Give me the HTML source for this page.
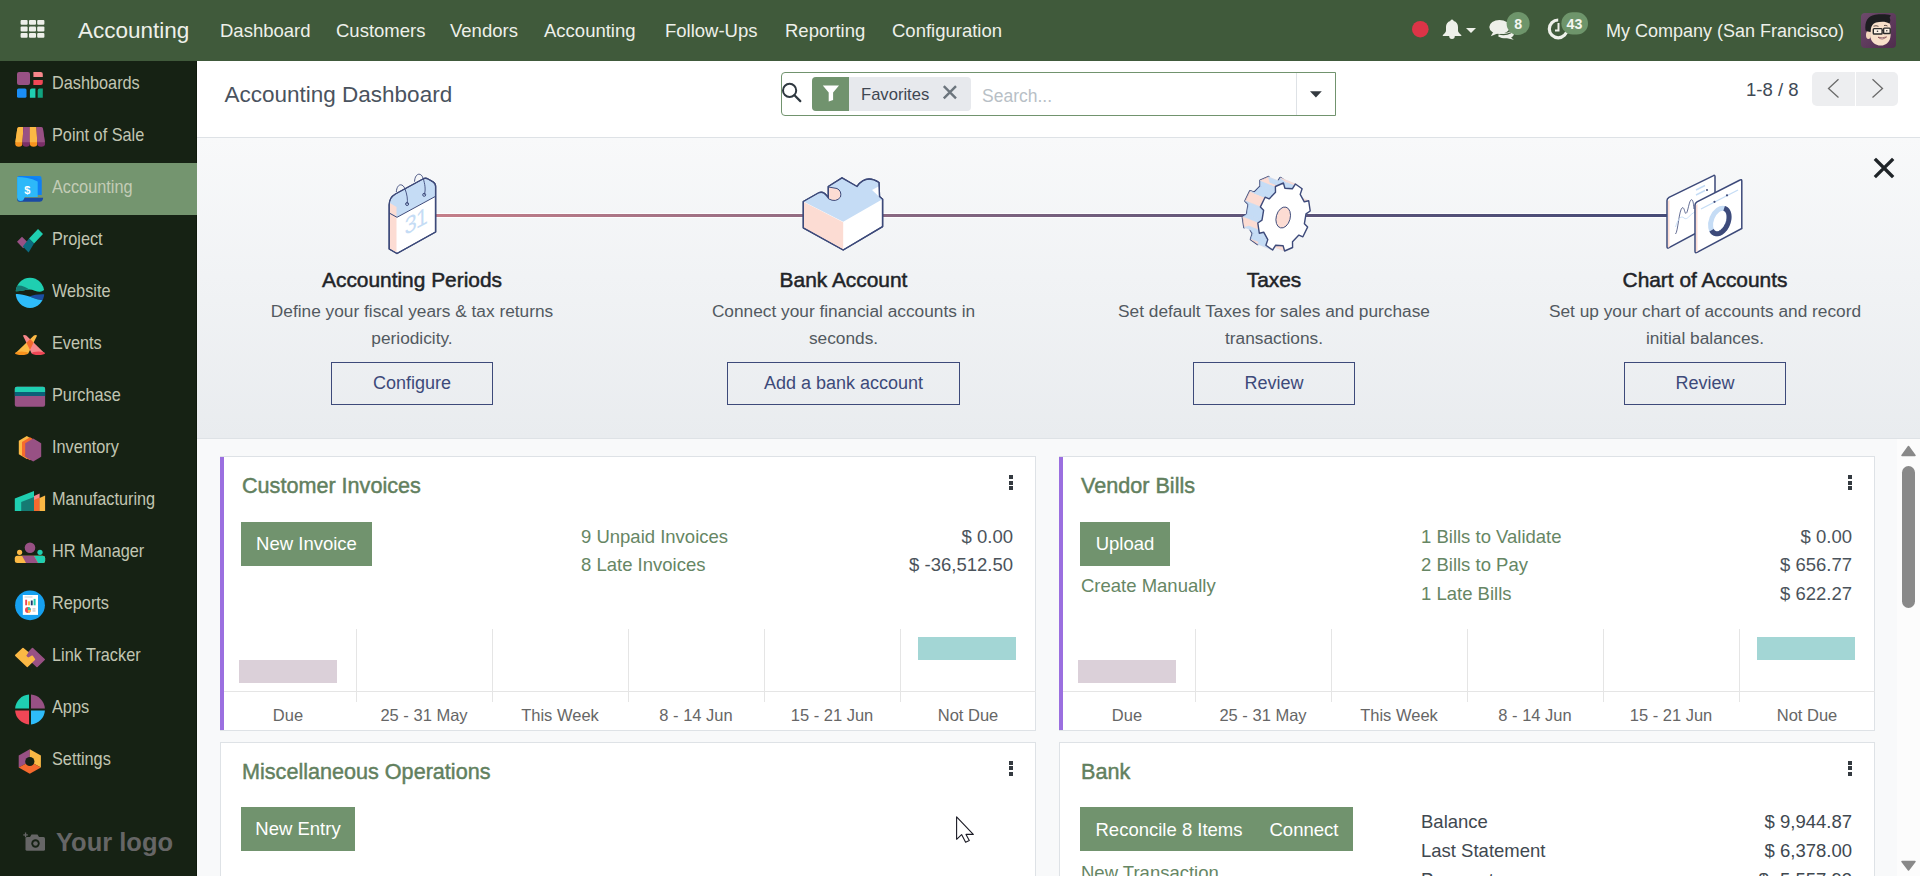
<!DOCTYPE html>
<html><head><meta charset="utf-8">
<style>
*{box-sizing:border-box;margin:0;padding:0}
html,body{width:1920px;height:876px;overflow:hidden;font-family:"Liberation Sans",sans-serif;background:#f8f9fa}
.a{position:absolute;white-space:nowrap}
#top{position:absolute;left:0;top:0;width:1920px;height:61px;background:#405a3b}
#top .m{position:absolute;color:#eef0ea;font-size:18.5px;line-height:18.5px}
#side{position:absolute;left:0;top:61px;width:197px;height:815px;background:#162214;border-right:1px solid #0f1a0c}
.si{position:absolute;left:0;width:196px;height:52px}
.si .t{position:absolute;left:52px;color:#d9dccb;font-size:17px;line-height:17px;letter-spacing:-0.3px}
.si svg{position:absolute;left:15px;top:12px}
#cp{position:absolute;left:197px;top:61px;width:1723px;height:77px;background:#fff;border-bottom:1px solid #dee2e6}
#onb{position:absolute;left:197px;top:138px;width:1723px;height:301px;background:linear-gradient(#f8f9fa,#e9ecef);border-bottom:1px solid #dee2e6}
.st{position:absolute;width:400px;text-align:center}
.st .h{position:absolute;left:0;width:400px;font-weight:bold;color:#1f2428;font-size:19.5px;line-height:19.5px}
.st .d{position:absolute;left:0;width:400px;color:#525960;font-size:17.3px;line-height:27px}
.st .b{position:absolute;top:224px;height:43px;border:1px solid #3d4a7a;color:#3d4a7a;font-size:18px;line-height:41px;text-align:center}
.card{position:absolute;background:#fff;border:1px solid #dee2e6}
.card.pl{border-left:4px solid #9a6fe0}
.ct{position:absolute;font-weight:bold;color:#62805e;font-size:20px;line-height:20px}
.dots{position:absolute;width:4px}
.dots i{display:block;width:4px;height:4px;background:#343a40;margin-bottom:1.5px}
.btn{position:absolute;background:#71936e;color:#fff;font-size:18.5px;line-height:44px;height:44px;text-align:center}
.sl{position:absolute;color:#668664;font-size:18.5px;line-height:18.5px}
.sv{position:absolute;color:#4b535b;font-size:18px;line-height:18px;text-align:right}
.lab{position:absolute;color:#666;font-size:16.5px;line-height:16.5px;text-align:center;width:136px}
.gv{position:absolute;width:1px;background:#e4e4e4}
.gh{position:absolute;height:1px;background:#e4e4e4}
.st2{font-size:18.6px;line-height:18.6px;transform:scaleX(0.875);transform-origin:0 0;color:#cdd1bf}
</style></head><body>

<!-- TOP BAR -->
<div id="top">
  <svg class="a" style="left:20px;top:20px" width="25" height="18" viewBox="0 0 25 18">
    <g fill="#eef0ea">
      <rect x="0.6" y="0" width="7" height="4.8" rx="1"/><rect x="9" y="0" width="7" height="4.8" rx="1"/><rect x="17.2" y="0" width="7.2" height="4.8" rx="1"/>
      <rect x="0.6" y="6.5" width="7" height="5" rx="1"/><rect x="9" y="6.5" width="7" height="5" rx="1"/><rect x="17.2" y="6.5" width="7.2" height="5" rx="1"/>
      <rect x="0.6" y="13" width="7" height="4.8" rx="1"/><rect x="9" y="13" width="7" height="4.8" rx="1"/><rect x="17.2" y="13" width="7.2" height="4.8" rx="1"/>
    </g>
  </svg>
  <div class="m" style="left:78px;top:19.5px;font-size:22.5px;line-height:22.5px">Accounting</div>
  <div class="m" style="left:220px;top:21.5px">Dashboard</div>
  <div class="m" style="left:336px;top:21.5px">Customers</div>
  <div class="m" style="left:450px;top:21.5px">Vendors</div>
  <div class="m" style="left:544px;top:21.5px">Accounting</div>
  <div class="m" style="left:665px;top:21.5px">Follow-Ups</div>
  <div class="m" style="left:785px;top:21.5px">Reporting</div>
  <div class="m" style="left:892px;top:21.5px">Configuration</div>

  <svg class="a" style="left:1400px;top:0" width="200" height="61" viewBox="1400 0 200 61">
    <circle cx="1420.3" cy="29.2" r="8.3" fill="#dd3447"/>
    <!-- bell -->
    <path d="M1452,19.5 C1453,19.5 1453.6,20.3 1453.6,21 C1456.5,21.8 1458,24 1458,27 L1458,30.5 C1458,32 1459.5,33.5 1461.3,35 L1461.3,36 L1442.8,36 L1442.8,35 C1444.5,33.5 1446,32 1446,30.5 L1446,27 C1446,24 1447.5,21.8 1450.4,21 C1450.4,20.3 1451,19.5 1452,19.5 Z" fill="#eef0ea"/>
    <path d="M1449.2,36 A2.8,3 0 0 0 1454.8,36 Z" fill="#eef0ea"/>
    <path d="M1466,28 H1476 L1471,33 Z" fill="#eef0ea"/>
    <!-- chat -->
    <path d="M1499,32 C1503,33.5 1508,33 1511,31 L1514,33.5 C1514,35.5 1512.5,37 1511,37.5 L1513.8,39.8 L1507,38.3 C1504,38.5 1500.5,38 1498.3,36.5 Z" fill="#eef0ea"/>
    <path d="M1498.5,33.8 C1502,35 1507,34.8 1511,32.8" fill="none" stroke="#405a3b" stroke-width="1.2"/>
    <ellipse cx="1499.5" cy="27" rx="10.2" ry="7" fill="#eef0ea"/>
    <path d="M1493.5,31.5 L1490.8,36.3 L1498,33.2 Z" fill="#eef0ea"/>
    <circle cx="1518.1" cy="23.5" r="11.5" fill="#6e956b"/>
    <text x="1518.3" y="28.9" font-family="Liberation Sans" font-weight="bold" font-size="14.2" fill="#f4f6f0" text-anchor="middle">8</text>
    <!-- activity clock -->
    <path d="M1558.2,20 A8.9,8.9 0 1 0 1567.1,28.9" fill="none" stroke="#eef0ea" stroke-width="3.2"/>
    <path d="M1558.5,22.9 V30.4 H1555" fill="none" stroke="#eef0ea" stroke-width="2"/>
    <rect x="1561.4" y="12.3" width="26.6" height="22.3" rx="11.15" fill="#6e956b"/>
    <text x="1574.5" y="28.9" font-family="Liberation Sans" font-weight="bold" font-size="14.2" fill="#f4f6f0" text-anchor="middle">43</text>
  </svg>
  <svg class="a" style="left:1861px;top:13px" width="35" height="35" viewBox="0 0 35 35">
    <defs><linearGradient id="avg" x1="0" y1="0" x2="1" y2="1"><stop offset="0" stop-color="#6e4a6c"/><stop offset="1" stop-color="#4f2c4d"/></linearGradient></defs>
    <rect width="35" height="35" rx="4" fill="url(#avg)"/>
    <ellipse cx="7.4" cy="22" rx="2.4" ry="4" fill="#f3d6bd"/>
    <path d="M9.2,11 C9.2,7.5 13,6.5 19,7 C25,7.5 29.6,9 29.6,14 L29.6,22 C29.6,28.5 25,32.6 19.8,32.6 C14,32.6 9.2,28.5 9.2,22 Z" fill="#f8e0ca"/>
    <path d="M4.5,17.5 C3.5,9 6.5,3 14,1.8 C20,1 26,1.2 29.8,2.2 L28.6,4.8 C29.8,6.8 29.4,9.2 28.2,10.5 C25,8.3 20,8.2 15,9.6 C12,10.6 10,12.5 9.6,19 L7,18.6 Z" fill="#1d1d20"/>
    <path d="M12.5,13.2 Q15,12.2 17.5,13.3 M23,12.5 Q25,12 26.5,13" fill="none" stroke="#3a2a2a" stroke-width="0.8"/>
    <rect x="12.3" y="15.6" width="8.8" height="5.4" rx="0.8" fill="#fff3e6" stroke="#2a2a2a" stroke-width="1.4"/>
    <rect x="22.6" y="15.1" width="6.6" height="5.4" rx="0.8" fill="#fff3e6" stroke="#2a2a2a" stroke-width="1.4"/>
    <path d="M21.1,17.5 H22.6" stroke="#2a2a2a" stroke-width="1.2"/>
    <circle cx="16.5" cy="18.3" r="0.8" fill="#333"/><circle cx="25.8" cy="17.8" r="0.8" fill="#333"/>
    <path d="M17,24.2 Q21,28 25.6,23.9 Q21,25.6 17,24.2 Z" fill="#fff" stroke="#7a3f45" stroke-width="0.7"/>
  </svg>
  <div class="m" style="left:1606px;top:21.5px;font-size:18px">My Company (San Francisco)</div>
</div>

<!-- SIDEBAR -->
<div id="side"><div style="position:absolute;left:0;top:102px;width:197px;height:52px;background:#74956f"></div></div>
<div class="a st2" style="left:52px;top:74.3px;color:#c2c6b3">Dashboards</div>
<div class="a st2" style="left:52px;top:126.3px;color:#c2c6b3">Point of Sale</div>
<div class="a st2" style="left:52px;top:178.3px;color:#c3ccb6">Accounting</div>
<div class="a st2" style="left:52px;top:230.3px;color:#c2c6b3">Project</div>
<div class="a st2" style="left:52px;top:282.3px;color:#c2c6b3">Website</div>
<div class="a st2" style="left:52px;top:334.3px;color:#c2c6b3">Events</div>
<div class="a st2" style="left:52px;top:386.3px;color:#c2c6b3">Purchase</div>
<div class="a st2" style="left:52px;top:438.3px;color:#c2c6b3">Inventory</div>
<div class="a st2" style="left:52px;top:490.3px;color:#c2c6b3">Manufacturing</div>
<div class="a st2" style="left:52px;top:542.3px;color:#c2c6b3">HR Manager</div>
<div class="a st2" style="left:52px;top:594.3px;color:#c2c6b3">Reports</div>
<div class="a st2" style="left:52px;top:646.3px;color:#c2c6b3">Link Tracker</div>
<div class="a st2" style="left:52px;top:698.3px;color:#c2c6b3">Apps</div>
<div class="a st2" style="left:52px;top:750.3px;color:#c2c6b3">Settings</div>
<svg class="a" style="left:0;top:0" width="197" height="876" viewBox="0 0 197 876">
<defs>
<clipPath id="wc"><ellipse cx="30" cy="292.85" rx="14.3" ry="15.2"/></clipPath>
</defs>
<!-- Dashboards -->
<rect x="17" y="72" width="13" height="13" rx="2" fill="#985184"/>
<path d="M33.4 72h7.4a2 2 0 0 1 2 2v3.1h-9.4z" fill="#f7878b"/>
<path d="M33.4 80h9.4v3a2 2 0 0 1-2 2h-7.4z" fill="#f04756"/>
<rect x="17" y="88.5" width="9.5" height="9.3" rx="1.5" fill="#1a8ef6"/>
<path d="M31.9 88.5h3.5v9.3h-5.5v-7.3a2 2 0 0 1 2-2z" fill="#1fcfb1"/>
<path d="M39.7 88.5h3.1v9.3h-5.1v-7.3a2 2 0 0 1 2-2z" fill="#10a37f"/>
<!-- POS -->
<path d="M19.4,127 H23.4 L22.4,143.5 A3.6,3.3 0 0 1 15.2,143.5 L17.2,129 Q17.4,127 19.4,127 Z" fill="#f7931e"/>
<path d="M19.4,127 H23.4 L22.5,142.3 H15.3 L17.2,129 Q17.4,127 19.4,127 Z" fill="#fbb945"/>
<path d="M23.4,127 H29.9 V143.5 A3.7,3.3 0 0 1 22.5,143.5 Z" fill="#7a2f68"/>
<path d="M23.4,127 H29.9 V142.3 H22.5 Z" fill="#985184"/>
<path d="M29.9,127 H36.5 L37.3,143.5 A3.7,3.3 0 0 1 29.9,143.5 Z" fill="#f7931e"/>
<path d="M29.9,127 H36.5 L37.2,142.3 H29.9 Z" fill="#fbb945"/>
<path d="M36.5,127 H41 Q42.8,127 43,129 L45.1,143.5 A3.9,3.3 0 0 1 37.3,143.5 Z" fill="#7a2f68"/>
<path d="M36.5,127 H41 Q42.8,127 43,129 L44.9,142.3 H37.2 Z" fill="#985184"/>
<!-- Accounting -->
<path d="M19 176h20.5a2 2 0 0 1 2 2v17h-22.5z" fill="#1286f2"/>
<path d="M17.2 178a2 2 0 0 1 2-2h0.5c8 0 15 1 21.8 4v15h-24.3z" fill="#0f7ff3"/>
<path d="M17.2 200a2 2 0 0 0 2 1.7h20.5c1.5 0 2.6-0.8 3-2l0.5-2h-26z" fill="#1a4aa5"/>
<path d="M17.2 198a3.6 3.6 0 0 0 7 0.5l0.5-1.5h13v-15.5c-7-3.5-14-4.5-20.5-4.5z" fill="#2db8f9"/>
<text x="27.3" y="194" font-family="Liberation Sans" font-weight="bold" font-size="11" fill="#fff" text-anchor="middle">$</text>
<!-- Project -->
<path d="M17,241.8 L22,236.8 L28.4,243 L23.2,248.2 Z" fill="#985184"/>
<path d="M38,229 L43,234 L34,243.6 L29,238.6 Z" fill="#1fcfb1"/>
<path d="M29,238.6 L34,243.6 L28.6,252.4 L22.8,246.4 Z" fill="#0c6b80"/>
<!-- Website -->
<g clip-path="url(#wc)">
<path d="M14,291.2 C20,292 25,289.5 29.4,289.5 C33,289.5 37,292 40,291.8 C42,291.6 44,290 46,289 V270 H14 Z" fill="#1fcfb1"/>
<path d="M14,291.2 C20,292 25,289.5 29.4,289.5 C26,287 21,285 16.8,285.7 C15,286 14,287 14,288 Z" fill="#157a73"/>
<path d="M29.4,296.6 C34,295 39,294 46,294.5 V300.5 C40,300.5 35,299 29.4,296.6 Z" fill="#1b4ea3"/>
<path d="M14,294.4 C18,293.5 23,294.5 29.4,296.6 C35,299 40,300.5 46,300.5 V312 H14 Z" fill="#2ebcfa"/>
</g>
<!-- Events -->
<path d="M33.9,335.5 Q35.5,334.3 37.1,335.5 L28.3,353.6 H15.1 Z" fill="#fbb945"/>
<path d="M22.9,335.5 Q24.6,334.3 26.3,335.5 L44.9,353.6 H31.7 Z" fill="#f8878b"/>
<path d="M26.5,342.66 L30.12,339.06 L33.56,342.53 L30,350 Z" fill="#f56a2e"/>
<ellipse cx="21.6" cy="353.2" rx="6.5" ry="1.7" fill="#f7931e"/>
<ellipse cx="38.4" cy="353.2" rx="6.5" ry="1.7" fill="#f04756"/>
<!-- Purchase -->
<rect x="14.8" y="386.7" width="30.3" height="20.1" rx="2" fill="#985184"/>
<path d="M16.8,386.7 H43.1 A2,2 0 0 1 45.1,388.7 V392 H14.8 V388.7 A2,2 0 0 1 16.8,386.7 Z" fill="#1fcfb1"/>
<rect x="14.8" y="392" width="30.3" height="4" fill="#0b5f78"/>
<!-- Inventory -->
<path d="M26.8,436 L34.8,440.8 L34.8,454.2 L26.8,459 L18.8,454.2 L18.8,440.8 Z" fill="#fbb945"/>
<path d="M30,437.3 L38,442 L38,455.4 L30,460.2 L22,455.4 L22,442 Z" fill="#f56a2e"/>
<path d="M33.2,438.5 L41.2,443.3 L41.2,456.7 L33.2,461.5 L25.2,456.7 L25.2,443.3 Z" fill="#985184"/>
<!-- Manufacturing -->
<path d="M14.8,498.5 L34,491 L34,511 L14.8,511 Z" fill="#1fcfb1"/>
<path d="M21.2,502 L34,497 L34,511 L21.2,511 Z" fill="#157a73"/>
<path d="M34,496 L39.6,493.5 L39.6,511 L34,511 Z" fill="#f8878b"/>
<path d="M34,500 L39.6,497.5 L39.6,511 L34,511 Z" fill="#f56a2e"/>
<path d="M39.6,498 L45.1,495.5 L45.1,511 L39.6,511 Z" fill="#fbb945"/>
<!-- HR -->
<circle cx="30" cy="547.8" r="5.3" fill="#985184"/>
<circle cx="19.6" cy="552.3" r="2.6" fill="#fbb945"/>
<circle cx="40" cy="552.3" r="2.6" fill="#1fcfb1"/>
<rect x="14.8" y="555.8" width="30.3" height="7.2" rx="2.5" fill="#fbb945"/>
<path d="M34,555.8 H42.6 A2.5,2.5 0 0 1 45.1,558.3 V560.5 A2.5,2.5 0 0 1 42.6,563 H38 Z" fill="#1fcfb1"/>
<path d="M22,555.8 H34 L38,563 H26 Z" fill="#985184"/>
<!-- Reports -->
<circle cx="30" cy="605.3" r="14.9" fill="#16a0f0"/>
<rect x="22.8" y="595" width="15.2" height="19.9" fill="#fff"/>
<rect x="24.5" y="596.5" width="8" height="1" fill="#ccc"/>
<rect x="25.2" y="599.7" width="1.9" height="5.6" fill="#f04756"/>
<rect x="27.9" y="601.3" width="2.1" height="4" fill="#fbb945"/>
<rect x="30.8" y="600.5" width="1.9" height="4.8" fill="#1d3b6e"/>
<rect x="33.6" y="598.9" width="2" height="6.4" fill="#1fcfb1"/>
<circle cx="27.9" cy="610" r="2.9" fill="#f04756"/>
<path d="M27.9,610 V607.1 A2.9,2.9 0 0 1 30.8,610 Z" fill="#1fcfb1"/>
<path d="M27.9,610 H30.8 A2.9,2.9 0 0 1 27.9,612.9 Z" fill="#fbb945"/>
<rect x="32.5" y="608.5" width="3" height="0.9" fill="#aaa"/>
<rect x="32.5" y="610.5" width="3" height="0.9" fill="#aaa"/>
<!-- Link Tracker -->
<path d="M32.5,648.6 L44.2,659.5 L37,666.3 L25.6,655.7 Z" fill="#985184" stroke="#985184" stroke-width="1.6" stroke-linejoin="round"/>
<path d="M23,648.6 L27.6,652.4 L25.3,655.7 L27.8,658.6 L32.2,656.3 L34.4,659.5 L27.4,666.3 L15.8,655.4 Z" fill="#fbb945" stroke="#fbb945" stroke-width="1.6" stroke-linejoin="round"/>
<!-- Apps -->
<path d="M29,708.5 H15.1 A14.9,14.9 0 0 1 29,694.6 Z" fill="#1fcfb1"/>
<path d="M31,708.5 V694.6 A14.9,14.9 0 0 1 44.9,708.5 Z" fill="#985184"/>
<path d="M29,710.5 V724.4 A14.9,14.9 0 0 1 15.1,710.5 Z" fill="#f04756"/>
<path d="M31,710.5 H44.9 A14.9,14.9 0 0 1 31,724.4 Z" fill="#2ebcfa"/>
<!-- Settings -->
<path d="M29.8,761.5 L29.8,749.2 L18.7,755.5 L18.7,767.5 Z" fill="#985184"/>
<path d="M29.8,761.5 L29.8,749.2 L40.9,755.5 L40.9,767.5 Z" fill="#fbb945"/>
<path d="M29.8,761.5 L40.9,767.5 L29.8,773.8 L18.7,767.5 Z" fill="#f56a2e"/>
<circle cx="29.8" cy="761.5" r="4.6" fill="#162214"/>
<!-- Your logo camera -->
<g fill="#666">
<rect x="25.5" y="837" width="19.5" height="13.8" rx="1.5"/>
<path d="M30 837l1.5-2.5h6l1.5 2.5z"/>
<rect x="23.3" y="834.3" width="4.5" height="1.3"/>
<rect x="24.9" y="832.5" width="1.3" height="4.8"/>
</g>
<circle cx="35.5" cy="843.5" r="4.2" fill="#162214"/>
<circle cx="35.5" cy="843.5" r="2.3" fill="#666"/>
</svg>
<div class="a" style="left:56px;top:829.5px;font-weight:bold;font-size:25.5px;line-height:25.5px;color:#666;letter-spacing:0px">Your logo</div>


<!-- CONTROL PANEL -->
<div id="cp"></div>
<div class="a" style="left:224.5px;top:84.2px;font-size:22.5px;line-height:22.5px;color:#4a535e">Accounting Dashboard</div>
<div class="a" style="left:781px;top:72px;width:555px;height:44px;border:1px solid #71936e;border-radius:4px 0 0 4px;background:#fff"></div>
<div class="a" style="left:1296px;top:73px;width:1px;height:42px;background:#dee2e6"></div>
<svg class="a" style="left:1309px;top:90px" width="14" height="8" viewBox="0 0 14 8"><path d="M1 1.2h11.8l-5.9 6.3z" fill="#343a40"/></svg>
<svg class="a" style="left:781px;top:82px" width="22" height="22" viewBox="0 0 22 22"><circle cx="8.6" cy="8.4" r="6.6" fill="none" stroke="#2f3840" stroke-width="2"/><path d="M13.5 13.3l5.8 5.8" stroke="#2f3840" stroke-width="2.2" stroke-linecap="round"/></svg>
<div class="a" style="left:812px;top:77px;width:159px;height:34px;border-radius:4px;background:#e7e9ed;overflow:hidden"><div style="position:absolute;left:0;top:0;width:37px;height:34px;background:#71936e"></div></div>
<svg class="a" style="left:822px;top:85px" width="18" height="17" viewBox="0 0 18 17"><path d="M0.8 0.5h16.2l-5.9 7v7.5l-4.4 1.5v-9z" fill="#fff"/></svg>
<div class="a" style="left:861px;top:86.7px;font-size:16.6px;line-height:16.6px;color:#3f4752">Favorites</div>
<svg class="a" style="left:942px;top:85px" width="16" height="15" viewBox="0 0 16 15"><path d="M1.8 1.2l12.2 12.2M14 1.2L1.8 13.4" stroke="#6c757d" stroke-width="2.4"/></svg>
<div class="a" style="left:982px;top:87.5px;font-size:17.5px;line-height:17.5px;color:#b8bfc6">Search...</div>
<div class="a" style="left:1746px;top:80.5px;font-size:18.5px;line-height:18.5px;color:#404a55">1-8 / 8</div>
<div class="a" style="left:1812px;top:72px;width:86px;height:34px;border-radius:5px;background:#edeef0"></div>
<div class="a" style="left:1855px;top:72px;width:1px;height:34px;background:#fff"></div>
<svg class="a" style="left:1812px;top:72px" width="86" height="34" viewBox="0 0 86 34"><path d="M26.5 7.2l-10 9.2 10 9.2M60.5 7.2l10 9.2-10 9.2" fill="none" stroke="#6b6b6b" stroke-width="1.3"/></svg>


<!-- ONBOARDING -->
<div id="onb"></div>
<svg class="a" style="left:197px;top:138px" width="1723" height="300" viewBox="197 138 1723 300">
<defs><linearGradient id="lg" x1="437" y1="0" x2="1667" y2="0" gradientUnits="userSpaceOnUse">
<stop offset="0" stop-color="#c47e89"/><stop offset="0.33" stop-color="#8e6a82"/><stop offset="0.67" stop-color="#5e5579"/><stop offset="1" stop-color="#474b77"/></linearGradient></defs>
<rect x="436" y="213" width="1231" height="5" fill="#fff" opacity="0.8"/>
<rect x="436" y="214" width="1231" height="3" fill="url(#lg)"/>
<!-- calendar -->
<g stroke="#3d4a7a" stroke-width="1.4" stroke-linejoin="round">
<path d="M389.2,249 L389.2,205 Q389.2,197.5 395.5,194 L423,179 Q425.5,177.6 428,179 L433,181.8 Q435.6,183.3 435.6,186.5 L435.6,232 L397,253.5 Z" fill="#fff"/>
</g>
<path d="M389.9,203 L396.5,207 L396.5,252.5 L389.9,248.5 Z" fill="#fcdcd3"/>
<path d="M389.9,205 Q389.9,198 395.8,194.6 L423.2,179.8 Q425.5,178.5 427.7,179.8 L432.6,182.5 Q434.9,183.8 434.9,186.8 L434.9,196.5 L397,217 L389.9,213 Z" fill="#c5dcf5"/>
<path d="M389.9,203 L396.5,207 L396.5,216.5 L389.9,212.7 Z" fill="#fcdcd3"/>
<g stroke="#3d4a7a" fill="none" stroke-linejoin="round">
<path d="M389.2,249 L389.2,205 Q389.2,197.5 395.5,194 L423,179 Q425.5,177.6 428,179 L433,181.8 Q435.6,183.3 435.6,186.5 L435.6,232 L397,253.5 Z" stroke-width="1.4"/>
<path d="M389.2,213 L397,217.3 L435.6,196.3" stroke-width="1"/>
<path d="M396.3,192 C397,183 403,183 405,189 C407,194 408,200 407.1,204" stroke-width="0.9"/>
<path d="M414.5,181.7 C415,173 421,172 423,178 C425,184 426,190 424.2,194.8" stroke-width="0.9"/>
</g>
<circle cx="407.1" cy="204" r="1.5" fill="none" stroke="#3d4a7a" stroke-width="1"/>
<circle cx="424.2" cy="194.8" r="1.5" fill="none" stroke="#3d4a7a" stroke-width="1"/>
<text x="0" y="0" font-family="Liberation Sans" font-size="24" fill="#c5dcf5" transform="matrix(0.92,-0.5,0,1,404.5,235.5)" letter-spacing="-1">31</text>
<!-- puzzle -->
<path d="M803.3,201.5 L818.3,193 Q823,190.5 826.5,195.5 L828.3,197.8 L828.3,186.5 L842,177.8 L857,186.5 Q866,174 879,182.5 L879.5,196.5 L882.6,199.2 L882.6,226.6 L843.2,250 L803.3,227.8 Z" fill="#fff" stroke="#3d4a7a" stroke-width="1.4" stroke-linejoin="round"/>
<path d="M803.8,201.8 L818.3,193.5 Q823,191 826.5,196 L828.5,198.5 L828.5,187 L842,178.5 L857,187 Q866,175 878.5,183 L879,196.8 L882,199.5 L843.2,221.8 Z" fill="#c5dcf5"/>
<path d="M828.5,187 L828.5,198.8 Q836,203 840.5,197 Q842,191 837,188.5 Z" fill="#fcdcd3" stroke="#3d4a7a" stroke-width="1"/>
<path d="M803.8,202 L843.2,222.3 L843.2,249.3 L803.8,227.5 Z" fill="#fcdcd3"/>
<path d="M872,190 L878.5,186.5 L879,196.5 Z" fill="#fff"/>
<path d="M803.3,201.5 L818.3,193 Q823,190.5 826.5,195.5 L828.3,197.8 L828.3,186.5 L842,177.8 L857,186.5 Q866,174 879,182.5 L879.5,196.5 L882.6,199.2 L882.6,226.6 L843.2,250 L803.3,227.8 Z" fill="none" stroke="#3d4a7a" stroke-width="1.4" stroke-linejoin="round"/>
<!-- gear -->
<path d="M1289.4,217.7 L1292.6,221.1 L1287.9,230.8 L1283.9,229.1 L1277.5,235.7 L1277.6,241.5 L1269.6,245.0 L1268.1,239.8 L1260.7,239.2 L1257.6,244.0 L1250.9,239.3 L1252.8,233.6 L1248.7,226.2 L1244.3,227.2 L1242.8,217.0 L1247.0,214.2 L1248.6,204.3 L1245.4,200.9 L1250.1,191.2 L1254.1,192.9 L1260.5,186.3 L1260.4,180.5 L1268.4,177.0 L1269.9,182.2 L1277.3,182.8 L1280.4,178.0 L1287.1,182.7 L1285.2,188.4 L1289.3,195.8 L1293.7,194.8 L1295.2,205.0 L1291.0,207.8Z" fill="#fcdcd3" stroke="#3d4a7a" stroke-width="2.4" stroke-linejoin="round"/>
<path d="M1260.4,206.9 L1265.1,197.2 L1250.1,191.2 L1245.4,200.9Z" fill="#fcdcd3" stroke="#fcdcd3" stroke-width="0.6" stroke-linejoin="round"/>
<path d="M1263.6,210.3 L1260.4,206.9 L1245.4,200.9 L1248.6,204.3Z" fill="#c5dcf5" stroke="#c5dcf5" stroke-width="0.6" stroke-linejoin="round"/>
<path d="M1265.1,197.2 L1269.1,198.9 L1254.1,192.9 L1250.1,191.2Z" fill="#c5dcf5" stroke="#c5dcf5" stroke-width="0.6" stroke-linejoin="round"/>
<path d="M1257.8,223.0 L1262.0,220.2 L1247.0,214.2 L1242.8,217.0Z" fill="#c5dcf5" stroke="#c5dcf5" stroke-width="0.6" stroke-linejoin="round"/>
<path d="M1262.0,220.2 L1263.6,210.3 L1248.6,204.3 L1247.0,214.2Z" fill="#c5dcf5" stroke="#c5dcf5" stroke-width="0.6" stroke-linejoin="round"/>
<path d="M1259.3,233.2 L1257.8,223.0 L1242.8,217.0 L1244.3,227.2Z" fill="#fcdcd3" stroke="#fcdcd3" stroke-width="0.6" stroke-linejoin="round"/>
<path d="M1269.1,198.9 L1275.5,192.3 L1260.5,186.3 L1254.1,192.9Z" fill="#c5dcf5" stroke="#c5dcf5" stroke-width="0.6" stroke-linejoin="round"/>
<path d="M1275.5,192.3 L1275.4,186.5 L1260.4,180.5 L1260.5,186.3Z" fill="#c5dcf5" stroke="#c5dcf5" stroke-width="0.6" stroke-linejoin="round"/>
<path d="M1275.4,186.5 L1283.4,183.0 L1268.4,177.0 L1260.4,180.5Z" fill="#fcdcd3" stroke="#fcdcd3" stroke-width="0.6" stroke-linejoin="round"/>
<path d="M1263.7,232.2 L1259.3,233.2 L1244.3,227.2 L1248.7,226.2Z" fill="#c5dcf5" stroke="#c5dcf5" stroke-width="0.6" stroke-linejoin="round"/>
<path d="M1283.4,183.0 L1284.9,188.2 L1269.9,182.2 L1268.4,177.0Z" fill="#c5dcf5" stroke="#c5dcf5" stroke-width="0.6" stroke-linejoin="round"/>
<path d="M1267.8,239.6 L1263.7,232.2 L1248.7,226.2 L1252.8,233.6Z" fill="#c5dcf5" stroke="#c5dcf5" stroke-width="0.6" stroke-linejoin="round"/>
<path d="M1265.9,245.3 L1267.8,239.6 L1252.8,233.6 L1250.9,239.3Z" fill="#c5dcf5" stroke="#c5dcf5" stroke-width="0.6" stroke-linejoin="round"/>
<path d="M1284.9,188.2 L1292.3,188.8 L1277.3,182.8 L1269.9,182.2Z" fill="#c5dcf5" stroke="#c5dcf5" stroke-width="0.6" stroke-linejoin="round"/>
<path d="M1272.6,250.0 L1265.9,245.3 L1250.9,239.3 L1257.6,244.0Z" fill="#fcdcd3" stroke="#fcdcd3" stroke-width="0.6" stroke-linejoin="round"/>
<path d="M1292.3,188.8 L1295.4,184.0 L1280.4,178.0 L1277.3,182.8Z" fill="#c5dcf5" stroke="#c5dcf5" stroke-width="0.6" stroke-linejoin="round"/>
<path d="M1275.7,245.2 L1272.6,250.0 L1257.6,244.0 L1260.7,239.2Z" fill="#c5dcf5" stroke="#c5dcf5" stroke-width="0.6" stroke-linejoin="round"/>
<path d="M1295.4,184.0 L1302.1,188.7 L1287.1,182.7 L1280.4,178.0Z" fill="#fcdcd3" stroke="#fcdcd3" stroke-width="0.6" stroke-linejoin="round"/>
<path d="M1283.1,245.8 L1275.7,245.2 L1260.7,239.2 L1268.1,239.8Z" fill="#c5dcf5" stroke="#c5dcf5" stroke-width="0.6" stroke-linejoin="round"/>
<path d="M1302.1,188.7 L1300.2,194.4 L1285.2,188.4 L1287.1,182.7Z" fill="#c5dcf5" stroke="#c5dcf5" stroke-width="0.6" stroke-linejoin="round"/>
<path d="M1300.2,194.4 L1304.3,201.8 L1289.3,195.8 L1285.2,188.4Z" fill="#c5dcf5" stroke="#c5dcf5" stroke-width="0.6" stroke-linejoin="round"/>
<path d="M1284.6,251.0 L1283.1,245.8 L1268.1,239.8 L1269.6,245.0Z" fill="#c5dcf5" stroke="#c5dcf5" stroke-width="0.6" stroke-linejoin="round"/>
<path d="M1304.3,201.8 L1308.7,200.8 L1293.7,194.8 L1289.3,195.8Z" fill="#c5dcf5" stroke="#c5dcf5" stroke-width="0.6" stroke-linejoin="round"/>
<path d="M1292.6,247.5 L1284.6,251.0 L1269.6,245.0 L1277.6,241.5Z" fill="#fcdcd3" stroke="#fcdcd3" stroke-width="0.6" stroke-linejoin="round"/>
<path d="M1292.5,241.7 L1292.6,247.5 L1277.6,241.5 L1277.5,235.7Z" fill="#c5dcf5" stroke="#c5dcf5" stroke-width="0.6" stroke-linejoin="round"/>
<path d="M1298.9,235.1 L1292.5,241.7 L1277.5,235.7 L1283.9,229.1Z" fill="#c5dcf5" stroke="#c5dcf5" stroke-width="0.6" stroke-linejoin="round"/>
<path d="M1308.7,200.8 L1310.2,211.0 L1295.2,205.0 L1293.7,194.8Z" fill="#fcdcd3" stroke="#fcdcd3" stroke-width="0.6" stroke-linejoin="round"/>
<path d="M1306.0,213.8 L1304.4,223.7 L1289.4,217.7 L1291.0,207.8Z" fill="#c5dcf5" stroke="#c5dcf5" stroke-width="0.6" stroke-linejoin="round"/>
<path d="M1310.2,211.0 L1306.0,213.8 L1291.0,207.8 L1295.2,205.0Z" fill="#c5dcf5" stroke="#c5dcf5" stroke-width="0.6" stroke-linejoin="round"/>
<path d="M1302.9,236.8 L1298.9,235.1 L1283.9,229.1 L1287.9,230.8Z" fill="#c5dcf5" stroke="#c5dcf5" stroke-width="0.6" stroke-linejoin="round"/>
<path d="M1304.4,223.7 L1307.6,227.1 L1292.6,221.1 L1289.4,217.7Z" fill="#c5dcf5" stroke="#c5dcf5" stroke-width="0.6" stroke-linejoin="round"/>
<path d="M1307.6,227.1 L1302.9,236.8 L1287.9,230.8 L1292.6,221.1Z" fill="#fcdcd3" stroke="#fcdcd3" stroke-width="0.6" stroke-linejoin="round"/>
<path d="M1304.4,223.7 L1307.6,227.1 L1302.9,236.8 L1298.9,235.1 L1292.5,241.7 L1292.6,247.5 L1284.6,251.0 L1283.1,245.8 L1275.7,245.2 L1272.6,250.0 L1265.9,245.3 L1267.8,239.6 L1263.7,232.2 L1259.3,233.2 L1257.8,223.0 L1262.0,220.2 L1263.6,210.3 L1260.4,206.9 L1265.1,197.2 L1269.1,198.9 L1275.5,192.3 L1275.4,186.5 L1283.4,183.0 L1284.9,188.2 L1292.3,188.8 L1295.4,184.0 L1302.1,188.7 L1300.2,194.4 L1304.3,201.8 L1308.7,200.8 L1310.2,211.0 L1306.0,213.8Z" fill="#fff" stroke="#3d4a7a" stroke-width="1.4" stroke-linejoin="round"/>
<ellipse cx="1283.2" cy="217.5" rx="7" ry="10.7" transform="rotate(15 1283.2 217.5)" fill="#fcdcd3" stroke="#3d4a7a" stroke-width="0.9"/>
<!-- chart of accounts -->
<path d="M1667,200.5 Q1667,198.5 1669,197.3 L1713,175.8 Q1715,174.6 1715,176.6 L1715,223 L1669,247.6 Q1667,248.8 1667,246.8 Z" fill="#fff" stroke="#3d4a7a" stroke-width="1.5"/>
<path d="M1668,201 L1669.5,200 L1669.5,247 L1668,247.8 Z" fill="#fcdcd3"/>
<path d="M1675.5,234 C1678,232 1679,209 1682.4,207.7 C1684.5,207 1684.5,213.5 1686,213.4 C1688,213 1689,199.7 1691.5,199.7 C1693.5,199.7 1693.5,206 1694,209" fill="none" stroke="#3d4a7a" stroke-width="0.8"/>
<path d="M1675.5,227 C1678,219 1681,215 1684,218 C1687,221 1690,214 1695,212" fill="none" stroke="#c5dcf5" stroke-width="0.9"/>
<path d="M1696,190 L1705,185.5 M1696,195 L1705,190.5" stroke="#c5dcf5" stroke-width="1.4"/>
<circle cx="1707" cy="190" r="1" fill="#3d4a7a"/>
<path d="M1695,205 Q1695,203 1697,201.8 L1740,180 Q1741.8,179 1741.8,181 L1741.8,228.5 L1697,252.3 Q1695,253.3 1695,251.3 Z" fill="#fff" stroke="#3d4a7a" stroke-width="1.5"/>
<path d="M1696,205 L1697.5,204 L1697.5,251.5 L1696,252.3 Z" fill="#fcdcd3"/>
<path d="M1701,209 L1738,190" stroke="#c5dcf5" stroke-width="1.3"/>
<circle cx="1714.5" cy="201.8" r="1.1" fill="#3d4a7a"/><circle cx="1727" cy="195.3" r="1.1" fill="#3d4a7a"/>
<ellipse cx="1719.8" cy="221" rx="8.4" ry="13.4" transform="rotate(22 1719.8 221)" fill="none" stroke="#c5dcf5" stroke-width="5"/>
<path d="M1724.12,208.35 L1724.82,208.58 L1725.48,208.90 L1726.10,209.31 L1726.66,209.81 L1727.18,210.40 L1727.64,211.07 L1728.04,211.81 L1728.38,212.63 L1728.65,213.51 L1728.86,214.44 L1728.99,215.42 L1729.06,216.45 L1729.05,217.51 L1728.98,218.60 L1728.84,219.71 L1728.62,220.82 L1728.34,221.94 L1728.00,223.05 L1727.59,224.15 L1727.12,225.22 L1726.60,226.26 L1726.02,227.26 L1725.40,228.21 L1724.74,229.10 L1724.04,229.94 L1723.30,230.70 L1722.54,231.40 L1721.76,232.01 L1720.96,232.54 L1720.16,232.98 L1719.35,233.33 L1718.54,233.59 L1717.75,233.75 L1716.97,233.82 L1716.21,233.78 L1715.48,233.65 L1714.78,233.42 L1714.12,233.10 L1713.50,232.69 L1712.94,232.19 L1712.42,231.60 L1711.96,230.93 L1711.56,230.19" fill="none" stroke="#3d4a7a" stroke-width="5"/>
<!-- close X -->
<path d="M1876,160 L1892,176 M1892,160 L1876,176" stroke="#1f2428" stroke-width="3.3" stroke-linecap="square"/>
</svg>
<div class="a" style="left:162px;top:270.3px;width:500px;text-align:center;color:#1f2428;font-size:20.9px;line-height:20.9px;-webkit-text-stroke:0.5px #1f2428">Accounting Periods</div>
<div class="a" style="left:162px;top:298.1px;width:500px;text-align:center;color:#525960;font-size:17.3px;line-height:27px">Define your fiscal years &amp; tax returns<br>periodicity.</div>
<div class="a" style="left:331.0px;top:362px;width:162px;height:43px;border:1px solid #3d4a7a;text-align:center;color:#3d4a7a;font-size:18px;line-height:41px">Configure</div>
<div class="a" style="left:593.5px;top:270.3px;width:500px;text-align:center;color:#1f2428;font-size:20.9px;line-height:20.9px;-webkit-text-stroke:0.5px #1f2428">Bank Account</div>
<div class="a" style="left:593.5px;top:298.1px;width:500px;text-align:center;color:#525960;font-size:17.3px;line-height:27px">Connect your financial accounts in<br>seconds.</div>
<div class="a" style="left:727.0px;top:362px;width:233px;height:43px;border:1px solid #3d4a7a;text-align:center;color:#3d4a7a;font-size:18px;line-height:41px">Add a bank account</div>
<div class="a" style="left:1024px;top:270.3px;width:500px;text-align:center;color:#1f2428;font-size:20.9px;line-height:20.9px;-webkit-text-stroke:0.5px #1f2428">Taxes</div>
<div class="a" style="left:1024px;top:298.1px;width:500px;text-align:center;color:#525960;font-size:17.3px;line-height:27px">Set default Taxes for sales and purchase<br>transactions.</div>
<div class="a" style="left:1193.0px;top:362px;width:162px;height:43px;border:1px solid #3d4a7a;text-align:center;color:#3d4a7a;font-size:18px;line-height:41px">Review</div>
<div class="a" style="left:1455px;top:270.3px;width:500px;text-align:center;color:#1f2428;font-size:20.9px;line-height:20.9px;-webkit-text-stroke:0.5px #1f2428">Chart of Accounts</div>
<div class="a" style="left:1455px;top:298.1px;width:500px;text-align:center;color:#525960;font-size:17.3px;line-height:27px">Set up your chart of accounts and record<br>initial balances.</div>
<div class="a" style="left:1624.0px;top:362px;width:162px;height:43px;border:1px solid #3d4a7a;text-align:center;color:#3d4a7a;font-size:18px;line-height:41px">Review</div>


<div class="a" style="left:220px;top:456px;width:816px;height:275px;background:#fff;border:1px solid #dee2e6"><div style="position:absolute;left:-1px;top:0;bottom:0;width:4px;background:#9b6fe0"></div></div>
<div class="a" style="left:1008.5px;top:475px;width:4px;height:15px;background:linear-gradient(#343a40 0 4px,transparent 4px 5.5px,#343a40 5.5px 9.5px,transparent 9.5px 11px,#343a40 11px 15px)"></div>
<div class="a" style="left:356px;top:629px;width:1px;height:73px;background:#e5e5e5"></div>
<div class="a" style="left:492px;top:629px;width:1px;height:73px;background:#e5e5e5"></div>
<div class="a" style="left:628px;top:629px;width:1px;height:73px;background:#e5e5e5"></div>
<div class="a" style="left:764px;top:629px;width:1px;height:73px;background:#e5e5e5"></div>
<div class="a" style="left:900px;top:629px;width:1px;height:73px;background:#e5e5e5"></div>
<div class="a" style="left:224px;top:691px;width:812px;height:1px;background:#e5e5e5"></div>
<div class="a" style="left:239px;top:660px;width:98px;height:23px;background:#dbd0d9"></div>
<div class="a" style="left:918px;top:637px;width:98px;height:23px;background:#a3d6d5"></div>
<div class="a" style="left:220px;width:136px;text-align:center;top:707.3px;color:#666;font-size:16.5px;line-height:16.5px">Due</div>
<div class="a" style="left:356px;width:136px;text-align:center;top:707.3px;color:#666;font-size:16.5px;line-height:16.5px">25 - 31 May</div>
<div class="a" style="left:492px;width:136px;text-align:center;top:707.3px;color:#666;font-size:16.5px;line-height:16.5px">This Week</div>
<div class="a" style="left:628px;width:136px;text-align:center;top:707.3px;color:#666;font-size:16.5px;line-height:16.5px">8 - 14 Jun</div>
<div class="a" style="left:764px;width:136px;text-align:center;top:707.3px;color:#666;font-size:16.5px;line-height:16.5px">15 - 21 Jun</div>
<div class="a" style="left:900px;width:136px;text-align:center;top:707.3px;color:#666;font-size:16.5px;line-height:16.5px">Not Due</div>
<div class="a" style="left:1059px;top:456px;width:816px;height:275px;background:#fff;border:1px solid #dee2e6"><div style="position:absolute;left:-1px;top:0;bottom:0;width:4px;background:#9b6fe0"></div></div>
<div class="a" style="left:1847.5px;top:475px;width:4px;height:15px;background:linear-gradient(#343a40 0 4px,transparent 4px 5.5px,#343a40 5.5px 9.5px,transparent 9.5px 11px,#343a40 11px 15px)"></div>
<div class="a" style="left:1195px;top:629px;width:1px;height:73px;background:#e5e5e5"></div>
<div class="a" style="left:1331px;top:629px;width:1px;height:73px;background:#e5e5e5"></div>
<div class="a" style="left:1467px;top:629px;width:1px;height:73px;background:#e5e5e5"></div>
<div class="a" style="left:1603px;top:629px;width:1px;height:73px;background:#e5e5e5"></div>
<div class="a" style="left:1739px;top:629px;width:1px;height:73px;background:#e5e5e5"></div>
<div class="a" style="left:1063px;top:691px;width:812px;height:1px;background:#e5e5e5"></div>
<div class="a" style="left:1078px;top:660px;width:98px;height:23px;background:#dbd0d9"></div>
<div class="a" style="left:1757px;top:637px;width:98px;height:23px;background:#a3d6d5"></div>
<div class="a" style="left:1059px;width:136px;text-align:center;top:707.3px;color:#666;font-size:16.5px;line-height:16.5px">Due</div>
<div class="a" style="left:1195px;width:136px;text-align:center;top:707.3px;color:#666;font-size:16.5px;line-height:16.5px">25 - 31 May</div>
<div class="a" style="left:1331px;width:136px;text-align:center;top:707.3px;color:#666;font-size:16.5px;line-height:16.5px">This Week</div>
<div class="a" style="left:1467px;width:136px;text-align:center;top:707.3px;color:#666;font-size:16.5px;line-height:16.5px">8 - 14 Jun</div>
<div class="a" style="left:1603px;width:136px;text-align:center;top:707.3px;color:#666;font-size:16.5px;line-height:16.5px">15 - 21 Jun</div>
<div class="a" style="left:1739px;width:136px;text-align:center;top:707.3px;color:#666;font-size:16.5px;line-height:16.5px">Not Due</div>
<div class="a" style="left:242px;top:474.6px;color:#62805e;font-size:21.6px;line-height:21.6px;-webkit-text-stroke:0.45px #62805e">Customer Invoices</div>
<div class="a" style="left:241px;top:522px;width:131px;height:44px;background:#71936e;color:#fff;font-size:18.5px;line-height:44px;text-align:center">New Invoice</div>
<div class="a" style="left:581px;top:528.2px;color:#668664;font-size:18.5px;line-height:18.5px;">9 Unpaid Invoices</div>
<div class="a" style="left:581px;top:555.6px;color:#668664;font-size:18.5px;line-height:18.5px;">8 Late Invoices</div>
<div class="a" style="left:713px;width:300px;text-align:right;top:528.2px;color:#4b535b;font-size:18.5px;line-height:18.5px">$ 0.00</div>
<div class="a" style="left:713px;width:300px;text-align:right;top:555.6px;color:#4b535b;font-size:18.5px;line-height:18.5px">$ -36,512.50</div>
<div class="a" style="left:1081px;top:474.6px;color:#62805e;font-size:21.6px;line-height:21.6px;-webkit-text-stroke:0.45px #62805e">Vendor Bills</div>
<div class="a" style="left:1080px;top:522px;width:90px;height:44px;background:#71936e;color:#fff;font-size:18.5px;line-height:44px;text-align:center">Upload</div>
<div class="a" style="left:1081px;top:576.9px;color:#668664;font-size:18.5px;line-height:18.5px;">Create Manually</div>
<div class="a" style="left:1421px;top:528.2px;color:#668664;font-size:18.5px;line-height:18.5px;">1 Bills to Validate</div>
<div class="a" style="left:1421px;top:555.6px;color:#668664;font-size:18.5px;line-height:18.5px;">2 Bills to Pay</div>
<div class="a" style="left:1421px;top:584.5px;color:#668664;font-size:18.5px;line-height:18.5px;">1 Late Bills</div>
<div class="a" style="left:1552px;width:300px;text-align:right;top:528.2px;color:#4b535b;font-size:18.5px;line-height:18.5px">$ 0.00</div>
<div class="a" style="left:1552px;width:300px;text-align:right;top:555.6px;color:#4b535b;font-size:18.5px;line-height:18.5px">$ 656.77</div>
<div class="a" style="left:1552px;width:300px;text-align:right;top:584.5px;color:#4b535b;font-size:18.5px;line-height:18.5px">$ 622.27</div>
<div class="a" style="left:220px;top:742px;width:816px;height:200px;background:#fff;border:1px solid #dee2e6"></div>
<div class="a" style="left:1008.5px;top:761px;width:4px;height:15px;background:linear-gradient(#343a40 0 4px,transparent 4px 5.5px,#343a40 5.5px 9.5px,transparent 9.5px 11px,#343a40 11px 15px)"></div>
<div class="a" style="left:1059px;top:742px;width:816px;height:200px;background:#fff;border:1px solid #dee2e6"></div>
<div class="a" style="left:1847.5px;top:761px;width:4px;height:15px;background:linear-gradient(#343a40 0 4px,transparent 4px 5.5px,#343a40 5.5px 9.5px,transparent 9.5px 11px,#343a40 11px 15px)"></div>
<div class="a" style="left:242px;top:760.6px;color:#62805e;font-size:21.6px;line-height:21.6px;-webkit-text-stroke:0.45px #62805e">Miscellaneous Operations</div>
<div class="a" style="left:241px;top:807px;width:114px;height:44px;background:#71936e;color:#fff;font-size:18.5px;line-height:44px;text-align:center">New Entry</div>
<div class="a" style="left:1081px;top:760.6px;color:#62805e;font-size:21.6px;line-height:21.6px;-webkit-text-stroke:0.45px #62805e">Bank</div>
<div class="a" style="left:1080px;top:807px;width:273px;height:44px;background:#71936e"></div>
<div class="a" style="left:1095.5px;top:820.8px;color:#fff;font-size:18.5px;line-height:18.5px;">Reconcile 8 Items</div>
<div class="a" style="left:1269.5px;top:820.8px;color:#fff;font-size:18.5px;line-height:18.5px;">Connect</div>
<div class="a" style="left:1081px;top:863.8px;color:#668664;font-size:18.5px;line-height:18.5px;">New Transaction</div>
<div class="a" style="left:1421px;top:813.3px;color:#404850;font-size:18.5px;line-height:18.5px;">Balance</div>
<div class="a" style="left:1421px;top:842.3px;color:#404850;font-size:18.5px;line-height:18.5px;">Last Statement</div>
<div class="a" style="left:1421px;top:871.3px;color:#404850;font-size:18.5px;line-height:18.5px;">Payments</div>
<div class="a" style="left:1552px;width:300px;text-align:right;top:813.3px;color:#404850;font-size:18.5px;line-height:18.5px">$ 9,944.87</div>
<div class="a" style="left:1552px;width:300px;text-align:right;top:842.3px;color:#404850;font-size:18.5px;line-height:18.5px">$ 6,378.00</div>
<div class="a" style="left:1552px;width:300px;text-align:right;top:871.3px;color:#404850;font-size:18.5px;line-height:18.5px">$ -5,557.93</div>
<div class="a" style="left:1897px;top:439px;width:23px;height:437px;background:#fcfcfc"></div>
<svg class="a" style="left:1897px;top:439px" width="23" height="437" viewBox="1897 439 23 437">
<path d="M1908.5,446.5 L1915,455.5 L1902,455.5 Z" fill="#898989" stroke="#898989" stroke-width="1.5" stroke-linejoin="round"/>
<rect x="1902" y="466" width="13" height="142" rx="6.5" fill="#898989"/>
<path d="M1908.5,870 L1915,861.5 L1902,861.5 Z" fill="#898989" stroke="#898989" stroke-width="1.5" stroke-linejoin="round"/>
</svg>
<svg class="a" style="left:950px;top:810px" width="30" height="40" viewBox="950 810 30 40"><path d="M956.6,816.8 L956.6,839.3 L961.6,834.6 L965.6,842.3 L969.3,840.6 L966,834.4 L973.3,834.4 Z" fill="#fff" stroke="#1a1a24" stroke-width="1.1" stroke-linejoin="round"/></svg>
</body></html>
